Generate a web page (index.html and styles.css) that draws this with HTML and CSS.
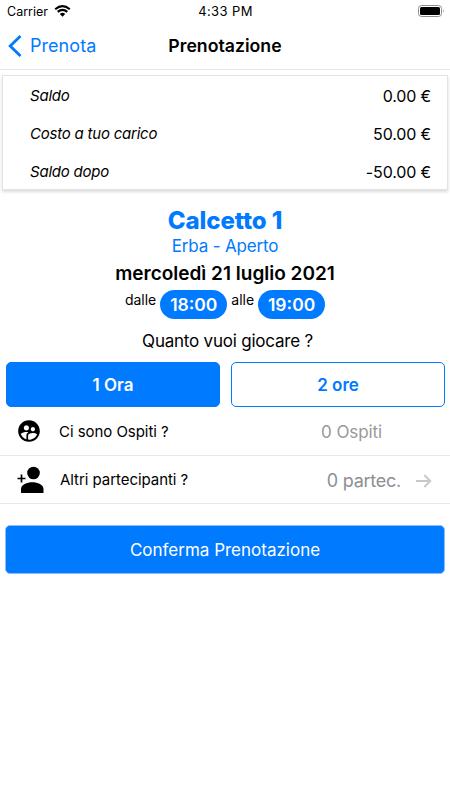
FILE: index.html
```html
<!DOCTYPE html>
<html lang="it">
<head>
<meta charset="utf-8">
<meta name="viewport" content="width=device-width">
<title>Prenotazione</title>
<link rel="stylesheet" href="styles.css">
</head>
<body>
<header class="status">
  <div class="carrier"><span>Carrier</span>
    <svg class="wifi" width="17" height="12" viewBox="0 0 17 12" fill="none" stroke="#000" stroke-width="2.1"><path d="M1.2 4.2Q8.5-2 15.800 4.200M3.700 6.900Q8.500 2.700 13.300 6.900"/><path d="M8.500 11.700L5.800 9Q8.500 6.700 11.200 9Z" fill="#000" stroke="none"/></svg>
  </div>
  <span class="clock">4:33 PM</span>
  <svg class="battery" width="27" height="12" viewBox="0 0 27 12"><rect x=".5" y=".5" width="23" height="11" rx="3" fill="none" stroke="#8c8c8c"/><rect x="2" y="2" width="20" height="8" rx="1.500"/><path d="M25 4.200Q26.500 6 25 7.800Z" fill="#777"/></svg>
</header>
<nav class="navbar">
  <a class="back"><svg width="14" height="22" viewBox="0 0 14 22" fill="none" stroke="#007aff" stroke-width="2.800"><path d="M12.500 1L2.200 11L12.500 21"/></svg><span>Prenota</span></a>
  <h1>Prenotazione</h1>
</nav>
<main>
  <section class="balance">
    <div class="line"><em>Saldo</em><span>0.00 €</span></div>
    <div class="line"><em>Costo a tuo carico</em><span>50.00 €</span></div>
    <div class="line"><em>Saldo dopo</em><span>-50.00 €</span></div>
  </section>
  <section class="booking">
    <h2>Calcetto 1</h2>
    <p class="place">Erba - Aperto</p>
    <p class="date">mercoledì 21 luglio 2021</p>
    <div class="times"><span>dalle</span><b>18:00</b><span>alle</span><b>19:00</b></div>
    <p class="question">Quanto vuoi giocare ?</p>
  </section>
  <div class="durations"><button class="selected">1 Ora</button><button>2 ore</button></div>
  <div class="row">
    <svg class="guests" width="26" height="26" viewBox="0 0 24 24"><path d="M11.99 2c-5.52 0-10 4.48-10 10s4.48 10 10 10 10-4.48 10-10-4.48-10-10-10zm3.61 6.34c1.07 0 1.93.86 1.93 1.93 0 1.07-.86 1.93-1.93 1.93-1.07 0-1.93-.86-1.93-1.93-.01-1.07.86-1.93 1.93-1.93zm-6-1.58c1.3 0 2.36 1.06 2.36 2.36 0 1.3-1.06 2.36-2.36 2.36s-2.36-1.06-2.36-2.36c0-1.31 1.05-2.36 2.36-2.36zm0 9.13v3.75c-2.4-.75-4.3-2.6-5.14-4.96 1.05-1.12 3.67-1.69 5.14-1.69.53 0 1.2.08 1.9.22-1.64.87-1.9 2.02-1.9 2.68zM11.99 20c-.27 0-.53-.01-.79-.04v-4.07c0-1.42 2.94-2.13 4.4-2.13 1.07 0 2.92.39 3.84 1.15-1.17 2.97-4.06 5.09-7.45 5.09z"/></svg>
    <span class="label">Ci sono Ospiti ?</span><span class="value guest-count">0 Ospiti</span>
  </div>
  <div class="row last">
    <svg class="people" width="27" height="28" viewBox="0 0 27 28"><circle cx="16.500" cy="7" r="6.300"/><path d="M4 26.500V23C4 18.500 10 16.200 15.300 16.200S26.500 18.500 26.500 23V26.500Q26.500 27 26 27H4.500Q4 27 4 26.500Z"/><path d="M4.500 8.500V16.500M.5 12.500H8.500" stroke="#000" stroke-width="1.700"/></svg>
    <span class="label">Altri partecipanti ?</span><span class="value party-count">0 partec.</span>
    <svg class="arrow" width="16" height="14" viewBox="0 0 16 14" fill="none" stroke="#c7c7cc" stroke-width="1.900"><path d="M0 7H14M8.300 1L14.300 7L8.300 13"/></svg>
  </div>
  <button class="confirm">Conferma Prenotazione</button>
</main>
</body>
</html>
```
FILE: styles.css
```css
* { box-sizing: border-box; }
body { margin: 0; background: #fff; color: #000; font-family: Inter, sans-serif; }
h1, h2, p { margin: 0; }
span, em, b, h1, h2, p { white-space: nowrap; }
button { font-family: inherit; padding: 0; }
svg { display: block; flex: none; }

.status { display: grid; grid-template-columns: 1fr auto 1fr; align-items: center; height: 22px; padding: 0 6px 0 7px; font-size: 13px; }
.carrier { display: flex; align-items: center; gap: 6px; font-size: 12.5px; }
.wifi { margin-top: -1px; }
.clock { letter-spacing: .4px; }
.battery { justify-self: end; margin: -1px -1px 0 0; }

.navbar { display: grid; grid-template-columns: 1fr auto 1fr; align-items: center; height: 48px; padding: 0 8px; border-bottom: 1px solid #e8e8e8; }
.back { display: flex; align-items: center; gap: 8px; color: #007aff; font-size: 18px; letter-spacing: .05px; }
h1 { font-size: 17.7px; font-weight: 600; }

.balance { height: 115px; margin: 5px 2px 0; border: 1px solid #e3e3e3; box-shadow: 0 2px 3px rgba(0,0,0,.14); padding: 1px 16px 0 27px; }
.line { display: flex; justify-content: space-between; align-items: center; height: 38px; font-size: 16px; letter-spacing: -.15px; }
.line em { font-size: 15px; letter-spacing: -.22px; padding-bottom: 1px; }

.booking { display: flex; flex-direction: column; align-items: center; padding-top: 16px; }
h2 { font-size: 24px; line-height: 29px; font-weight: 800; letter-spacing: -.1px; color: #007aff; }
.place { font-size: 17px; line-height: 22px; letter-spacing: -.15px; color: #007aff; }
.date { font-size: 19px; line-height: 33px; font-weight: 600; }
.times { display: flex; gap: 4px; height: 31px; font-size: 14px; line-height: 19px; }
.times b { display: block; width: 67px; height: 29px; border-radius: 15px; background: #007aff; color: #fff; text-align: center; font-size: 17.5px; line-height: 30px; font-weight: 600; }
.question { font-size: 17px; line-height: 24px; margin: 8px 0 0 5px; letter-spacing: -.22px; }

.durations { display: grid; grid-template-columns: 214px 214px; justify-content: space-between; margin: 9px 5px 0 6px; }
.durations button { height: 45px; border: 1px solid #007aff; border-radius: 5px; background: #fff; color: #007aff; font-size: 17px; font-weight: 600; }
.durations .selected { background: #007aff; color: #fff; }

.row { display: flex; align-items: center; height: 49px; padding: 0 18px 0 16px; border-bottom: 1px solid #e8e8e8; }
.label { font-size: 15px; letter-spacing: -.05px; }
.guests { margin-right: 17px; }
.people { margin: 0 16px 0 1px; }
.value { margin-left: auto; padding-top: 1px; color: #8e8e93; font-size: 17px; }
.guest-count { margin-right: 50px; color: #999; letter-spacing: -.1px; }
.last { height: 48px; }
.last .value { font-size: 18px; margin-right: 15px; letter-spacing: -.25px; }
.arrow { margin-top: 3px; }

.confirm { display: block; width: 440px; height: 49px; margin: 21px 0 0 5px; border: 1px solid #8dbdff; border-radius: 5px; background: #007aff; color: #fff; font-size: 17px; }
```
